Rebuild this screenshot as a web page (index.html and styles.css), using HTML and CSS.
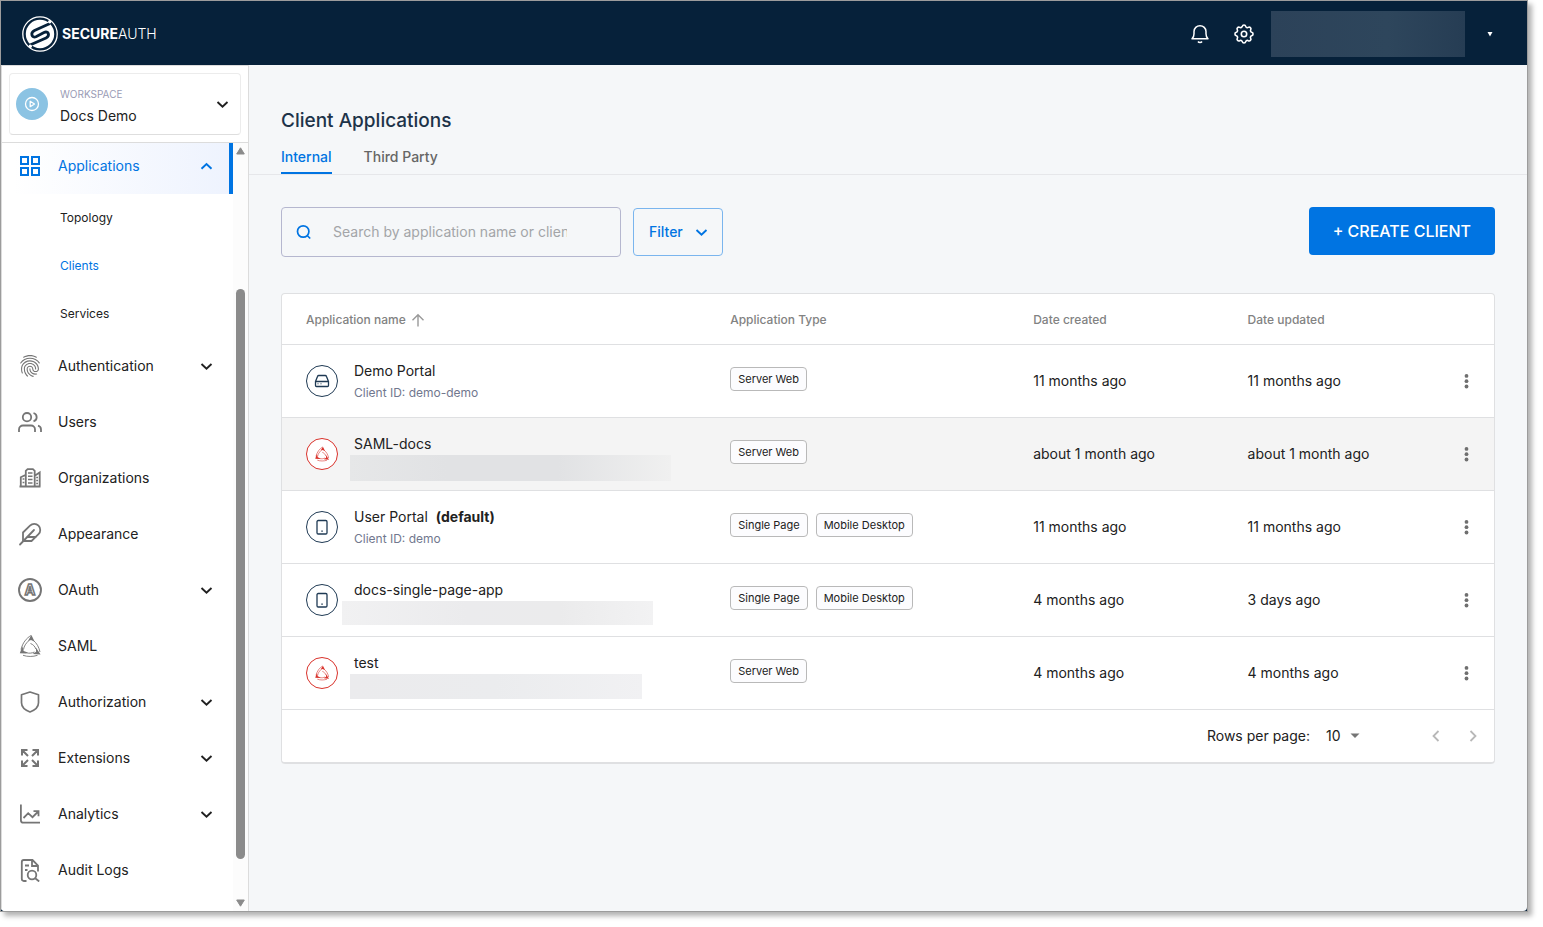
FILE: index.html
```html
<!DOCTYPE html>
<html lang="en">
<head>
  <meta charset="UTF-8">
  <meta name="viewport" content="width=device-width, initial-scale=1">
  <title>Client Applications</title>
  <link rel="stylesheet" href="styles.css">
</head>
<body>
  <!-- Icons -->
  <svg class="sprite" aria-hidden="true">
    <symbol id="chevron-down" viewBox="0 0 24 24"><path d="M7.500 10l5 4.800 5-4.800" fill="none" stroke="currentColor" stroke-width="1.900"/></symbol>
    <symbol id="chevron-up" viewBox="0 0 24 24"><path d="M7.500 14.800l5-4.800 5 4.800" fill="none" stroke="currentColor" stroke-width="1.900"/></symbol>
    <symbol id="more" viewBox="0 0 24 24"><g fill="currentColor"><circle cx="12.500" cy="6.900" r="1.900"/><circle cx="12.500" cy="12.200" r="1.900"/><circle cx="12.500" cy="17.500" r="1.900"/></g></symbol>
    <symbol id="saml" viewBox="0 0 24 24">
      <path d="M13.400 1l3.300 6.800-3.700-1.900-3.200 1.400zM1.800 19.300l2.500-7 1.400 4.600 4 1.700-1.500 1zM22.600 20.500l-8-.5 3.500-2.200-.2-4.200z" fill="currentColor"/>
      <g fill="none" stroke="currentColor" stroke-width=".9">
        <path d="M13 1.500C8.500 4 4.500 9 3 15.500M10.500 7c-2.500 2.300-4.500 5-5 8.500M15.500 6.500c3 2.500 5.500 6.500 6.500 11.500M12.500 9.500c2.500 1 4.500 2.800 5.300 5.500"/>
        <path d="M5 21.300c4.500 1.600 10 1.500 14.500 0M8.500 18.800c3 .8 5.500.3 8-.8"/>
      </g>
    </symbol>
    <symbol id="server" viewBox="0 0 16 16">
      <path d="M1.500 8.300v4.200c0 .6.400 1 1 1h11c.6 0 1-.4 1-1V8.300M1.500 8.500l2-5c.2-.6.600-1 1.300-1h6.400c.7 0 1.100.4 1.300 1l2 5M1.500 8.500h13" fill="none" stroke="currentColor" stroke-width="1.300"/>
      <path d="M3.500 10.800h1M6.500 10.800h1" stroke="currentColor"/>
    </symbol>
    <symbol id="mobile" viewBox="0 0 16 16">
      <rect x="3" y="1.500" width="10" height="13.500" rx="1.200" fill="none" stroke="currentColor" stroke-width="1.300"/>
      <path d="M7.300 12.200h1.500" stroke="currentColor" stroke-width="1.200"/>
    </symbol>
  </svg>

  <div class="window">
    <header class="topbar">
      <a class="logo" href="#">
        <svg width="36" height="36" viewBox="0 0 36 36" aria-hidden="true">
          <circle cx="18" cy="18" r="17.200" fill="none" stroke="#fff" stroke-width="1.300"/>
          <circle cx="18" cy="18" r="14.200" fill="#fff"/>
          <path d="M28 7.500L12.500 14.500C8 16.800 9.700 22.300 14 20.800L22 16.500C26.500 14.300 28.300 19.700 24 22L8 29" fill="none" stroke="#06213a" stroke-width="2.800"/>
          <circle cx="27.700" cy="5.800" r="1.700" fill="#fff"/>
          <circle cx="8.300" cy="30.200" r="1.700" fill="#fff"/>
        </svg>
        <span class="logo-text"><b>SECURE</b>AUTH</span>
      </a>
      <div class="topbar-actions">
        <button class="icon-btn" aria-label="Notifications">
          <svg width="24" height="24" viewBox="0 0 24 24" fill="none" stroke="currentColor" stroke-width="1.500" aria-hidden="true">
            <path d="M4 16.800h16c-1.500-1.200-2-3-2-5V9.500a6 5.800 0 0 0-12 0v2.300c0 2-.5 3.800-2 5z" stroke-linejoin="round"/>
            <path d="M10 19.500c.8 1.300 3.200 1.300 4 0"/>
          </svg>
        </button>
        <button class="icon-btn" aria-label="Settings">
          <svg width="24" height="24" viewBox="0 0 24 24" fill="none" stroke="currentColor" stroke-width="1.600" stroke-linejoin="round" aria-hidden="true">
            <path d="M10.300 4.300c.4-1.800 3-1.800 3.400 0a1.700 1.700 0 0 0 2.600 1.100c1.500-1 3.300.8 2.400 2.400a1.700 1.700 0 0 0 1 2.500c1.800.4 1.800 3 0 3.400a1.700 1.700 0 0 0-1 2.600c.9 1.500-.9 3.300-2.400 2.400a1.700 1.700 0 0 0-2.600 1c-.4 1.800-3 1.800-3.400 0a1.700 1.700 0 0 0-2.600-1c-1.500.9-3.300-.9-2.400-2.400a1.700 1.700 0 0 0-1-2.600c-1.800-.4-1.800-3 0-3.400a1.700 1.700 0 0 0 1-2.500c-.9-1.600.9-3.400 2.400-2.400 1 .6 2.300 0 2.600-1.100z"/>
            <circle cx="12" cy="12" r="2.700"/>
          </svg>
        </button>
        <div class="account"></div>
        <button class="icon-btn" aria-label="Account menu">
          <svg width="24" height="24" viewBox="0 0 24 24" aria-hidden="true"><path d="M9.500 10h5L12 14.500z" fill="currentColor"/></svg>
        </button>
      </div>
    </header>

    <div class="layout">
      <aside class="sidebar">
        <div class="workspace-wrap">
          <button class="workspace">
            <svg width="32" height="32" viewBox="0 0 32 32" aria-hidden="true">
              <circle cx="16" cy="16" r="16" fill="#8bc3e3"/>
              <circle cx="16" cy="16" r="6.500" fill="none" stroke="#fff" stroke-width="1.300"/>
              <path d="M14.200 13.300v5.400l4.300-2.700z" fill="none" stroke="#fff" stroke-width="1.300" stroke-linejoin="round"/>
            </svg>
            <span class="workspace-text">
              <span class="workspace-label">WORKSPACE</span>
              <span class="workspace-name">Docs Demo</span>
            </span>
            <svg class="chevron" aria-hidden="true"><use href="#chevron-down"/></svg>
          </button>
        </div>

        <div class="nav-scroll">
          <nav class="nav">
            <a class="nav-item active" href="#">
              <svg class="nav-icon" viewBox="0 0 24 24" fill="none" stroke="currentColor" stroke-width="2" aria-hidden="true"><path d="M3 3h7v7H3zM14 3h7v7h-7zM3 14h7v7H3zM14 14h7v7h-7z"/></svg>
              <span>Applications</span>
              <svg class="chevron" aria-hidden="true"><use href="#chevron-up"/></svg>
            </a>
            <a class="sub-item" href="#">Topology</a>
            <a class="sub-item current" href="#">Clients</a>
            <a class="sub-item" href="#">Services</a>
            <a class="nav-item" href="#">
              <svg class="nav-icon" viewBox="1 1 22 22" fill="currentColor" aria-hidden="true"><path d="M17.810 4.470c-.08 0-.16-.02-.23-.06C15.660 3.420 14 3 12.010 3c-1.980 0-3.860.47-5.570 1.410-.24.13-.54.04-.68-.2-.13-.24-.04-.55.2-.68C7.820 2.520 9.860 2 12.010 2c2.130 0 3.990.47 6.030 1.520.25.13.34.43.21.67-.09.18-.26.28-.44.28zM3.500 9.720c-.1 0-.2-.03-.29-.09-.23-.16-.28-.47-.12-.7.99-1.400 2.250-2.500 3.750-3.270C9.980 4.040 14 4.030 17.150 5.650c1.500.77 2.760 1.860 3.750 3.250.16.22.11.54-.12.7-.23.16-.54.11-.7-.12-.9-1.260-2.040-2.250-3.390-2.940-2.870-1.470-6.540-1.470-9.400.01-1.360.7-2.500 1.700-3.400 2.960-.08.14-.23.21-.39.21zm6.250 12.070c-.13 0-.26-.05-.35-.15-.87-.87-1.340-1.430-2.010-2.640-.69-1.230-1.050-2.730-1.050-4.340 0-2.970 2.540-5.390 5.660-5.390s5.660 2.420 5.660 5.390c0 .28-.22.5-.5.5s-.5-.22-.5-.5c0-2.420-2.090-4.390-4.660-4.390-2.570 0-4.660 1.970-4.660 4.390 0 1.440.32 2.770.93 3.850.64 1.150 1.080 1.640 1.850 2.420.19.2.19.51 0 .71-.11.1-.24.15-.37.15zm7.170-1.850c-1.190 0-2.240-.3-3.100-.89-1.490-1.010-2.380-2.650-2.380-4.390 0-.28.22-.5.5-.5s.5.22.5.5c0 1.410.72 2.740 1.940 3.560.71.48 1.540.71 2.540.71.24 0 .64-.03 1.040-.1.27-.05.53.13.58.41.05.27-.13.53-.41.58-.57.11-1.070.12-1.210.12zM14.910 22c-.04 0-.09-.01-.13-.02-1.590-.44-2.630-1.030-3.720-2.100-1.400-1.390-2.170-3.240-2.170-5.220 0-1.620 1.380-2.940 3.080-2.940 1.700 0 3.080 1.320 3.080 2.940 0 1.070.93 1.940 2.080 1.940s2.080-.87 2.080-1.940c0-3.770-3.250-6.830-7.250-6.830-2.840 0-5.440 1.580-6.610 4.030-.39.81-.59 1.760-.59 2.800 0 .78.07 2.010.67 3.610.1.26-.03.55-.29.64-.26.1-.55-.04-.64-.29-.49-1.310-.73-2.610-.73-3.960 0-1.200.23-2.290.68-3.240 1.330-2.790 4.280-4.600 7.510-4.600 4.550 0 8.250 3.510 8.250 7.830 0 1.620-1.380 2.940-3.080 2.940s-3.080-1.320-3.080-2.940c0-1.070-.93-1.940-2.080-1.940s-2.080.87-2.080 1.940c0 1.710.66 3.310 1.870 4.510.95.94 1.860 1.460 3.270 1.850.27.07.42.35.35.61-.05.23-.26.38-.47.38z"/></svg>
              <span>Authentication</span>
              <svg class="chevron" aria-hidden="true"><use href="#chevron-down"/></svg>
            </a>
            <a class="nav-item" href="#">
              <svg class="nav-icon" viewBox="0 0 24 24" fill="none" stroke="currentColor" stroke-width="1.800" aria-hidden="true"><path d="M17 22v-2.500a4 4 0 0 0-4-4H5a4 4 0 0 0-4 4V22"/><circle cx="9" cy="7.200" r="4.200"/><path d="M23 22v-2.500a4 4 0 0 0-3-3.900M15.500 3a4.300 4.300 0 0 1 0 8.300"/></svg>
              <span>Users</span>
            </a>
            <a class="nav-item" href="#">
              <svg class="nav-icon" viewBox="0 0 24 24" fill="none" stroke="currentColor" stroke-width="1.800" aria-hidden="true"><path d="M1.500 20.500h21M2.800 20.500v-9.300l5-2.400M21.700 20.500V6.500l-5 3.200M7.800 20.500V4.800l1.800-1.600h5.300l1.800 1.600v15.700"/><path d="M10 7h4.500M10 10.300h4.500M10 13.600h4.500M10 17h4.500M4.600 13h1.800M4.600 16.500h1.800M18.200 11.500H20M18.200 14.500H20M18.200 17.500H20" stroke-width="1.500"/></svg>
              <span>Organizations</span>
            </a>
            <a class="nav-item" href="#">
              <svg class="nav-icon" viewBox="0 0 24 24" fill="none" stroke="currentColor" stroke-width="1.800" stroke-linecap="round" stroke-linejoin="round" aria-hidden="true"><path d="M20.500 12.200a6 6 0 0 0-8.500-8.500L5 10.500V19h8.500z"/><path d="M16 8L2 22.500M17.500 15H9"/></svg>
              <span>Appearance</span>
            </a>
            <a class="nav-item" href="#">
              <svg class="nav-icon" viewBox="0 0 24 24" aria-hidden="true">
                <circle cx="12" cy="12" r="11" fill="none" stroke="currentColor" stroke-width="1.900"/>
                <text class="oauth-letter" x="12" y="17" text-anchor="middle">A</text>
              </svg>
              <span>OAuth</span>
              <svg class="chevron" aria-hidden="true"><use href="#chevron-down"/></svg>
            </a>
            <a class="nav-item" href="#">
              <svg class="nav-icon" aria-hidden="true"><use href="#saml"/></svg>
              <span>SAML</span>
            </a>
            <a class="nav-item" href="#">
              <svg class="nav-icon" viewBox="0 0 24 24" fill="none" stroke="currentColor" stroke-width="1.700" stroke-linejoin="round" aria-hidden="true"><path d="M12 2l8.500 2.800v8c0 4-3.200 7.200-8.500 9.200-5.300-2-8.500-5.200-8.500-9.200v-8z"/></svg>
              <span>Authorization</span>
              <svg class="chevron" aria-hidden="true"><use href="#chevron-down"/></svg>
            </a>
            <a class="nav-item" href="#">
              <svg class="nav-icon" viewBox="0 0 24 24" fill="none" stroke="currentColor" stroke-width="2" aria-hidden="true"><path d="M4 9.500V4h5.500M14.500 4H20v5.500M20 14.500V20h-5.500M9.500 20H4v-5.500M4 4l6 6M20 4l-6 6M20 20l-6-6M4 20l6-6"/></svg>
              <span>Extensions</span>
              <svg class="chevron" aria-hidden="true"><use href="#chevron-down"/></svg>
            </a>
            <a class="nav-item" href="#">
              <svg class="nav-icon" viewBox="0 0 24 24" fill="none" stroke="currentColor" stroke-width="1.800" aria-hidden="true"><path d="M2.900 2.500v15.700c0 1.600.9 2.500 2.500 2.500H22"/><path d="M5.500 16l4.700-4.800 4.300 4 5.700-5.700M15.500 9.200h5v5"/></svg>
              <span>Analytics</span>
              <svg class="chevron" aria-hidden="true"><use href="#chevron-down"/></svg>
            </a>
            <a class="nav-item" href="#">
              <svg class="nav-icon" viewBox="0 0 24 24" fill="none" stroke="currentColor" stroke-width="1.800" aria-hidden="true"><path d="M8.500 23H5.800c-1.200 0-2-.8-2-2V4c0-1.200.8-2 2-2h8.700l5.500 5.500v6M14 2v6h6M7 7.500h4M7 12h2.500"/><circle cx="14" cy="17" r="4.300"/><path d="M17.200 20.200l4 3.300"/></svg>
              <span>Audit Logs</span>
            </a>
          </nav>
          <div class="scrollbar" aria-hidden="true">
            <svg width="9" height="8" viewBox="0 0 9 8"><path d="M4.500.8L8.300 7H.7z" fill="#8b8b8b" stroke="#8b8b8b" stroke-linejoin="round"/></svg>
            <div class="scrollbar-thumb"></div>
            <svg width="9" height="8" viewBox="0 0 9 8"><path d="M4.500 7.200L8.300 1H.7z" fill="#8b8b8b" stroke="#8b8b8b" stroke-linejoin="round"/></svg>
          </div>
        </div>
      </aside>

      <main class="content">
        <h1>Client Applications</h1>
        <div class="tabs">
          <a class="tab selected" href="#">Internal</a>
          <a class="tab" href="#">Third Party</a>
        </div>

        <div class="toolbar">
          <div class="search">
            <svg width="16" height="16" viewBox="0 0 16 16" fill="none" stroke="#0074e2" stroke-width="1.700" aria-hidden="true"><circle cx="7.200" cy="7.500" r="5.700"/><path d="M11.200 11.500l3 3"/></svg>
            <input type="text" placeholder="Search by application name or client ID" aria-label="Search clients">
          </div>
          <button class="filter-btn">
            Filter
            <svg class="chevron" aria-hidden="true"><use href="#chevron-down"/></svg>
          </button>
          <button class="create-btn">+ CREATE CLIENT</button>
        </div>

        <section class="card">
          <table class="clients">
            <colgroup>
              <col class="col-name">
              <col class="col-type">
              <col>
              <col>
              <col class="col-menu">
            </colgroup>
            <thead>
              <tr>
                <th>
                  <span class="sort">Application name
                    <svg width="14" height="14" viewBox="0 0 14 14" fill="none" stroke="#999" stroke-width="1.400" aria-hidden="true"><path d="M7 13.500V2M1.500 7.300L7 1.800l5.500 5.500"/></svg>
                  </span>
                </th>
                <th>Application Type</th>
                <th>Date created</th>
                <th>Date updated</th>
                <th></th>
              </tr>
            </thead>
            <tbody>
              <tr>
                <td>
                  <div class="app">
                    <span class="app-icon"><svg aria-hidden="true"><use href="#server"/></svg></span>
                    <div>
                      <div class="app-name">Demo Portal</div>
                      <div class="app-id">Client ID: demo-demo</div>
                    </div>
                  </div>
                </td>
                <td><span class="chip">Server Web</span></td>
                <td>11 months ago</td>
                <td>11 months ago</td>
                <td><button class="menu-btn" aria-label="More"><svg aria-hidden="true"><use href="#more"/></svg></button></td>
              </tr>
              <tr class="hovered">
                <td>
                  <div class="app">
                    <span class="app-icon red"><svg aria-hidden="true"><use href="#saml"/></svg></span>
                    <div>
                      <div class="app-name">SAML-docs</div>
                      <div class="masked masked-long"></div>
                    </div>
                  </div>
                </td>
                <td><span class="chip">Server Web</span></td>
                <td>about 1 month ago</td>
                <td>about 1 month ago</td>
                <td><button class="menu-btn" aria-label="More"><svg aria-hidden="true"><use href="#more"/></svg></button></td>
              </tr>
              <tr>
                <td>
                  <div class="app">
                    <span class="app-icon"><svg aria-hidden="true"><use href="#mobile"/></svg></span>
                    <div>
                      <div class="app-name">User Portal <b>(default)</b></div>
                      <div class="app-id">Client ID: demo</div>
                    </div>
                  </div>
                </td>
                <td><span class="chip">Single Page</span><span class="chip">Mobile Desktop</span></td>
                <td>11 months ago</td>
                <td>11 months ago</td>
                <td><button class="menu-btn" aria-label="More"><svg aria-hidden="true"><use href="#more"/></svg></button></td>
              </tr>
              <tr>
                <td>
                  <div class="app">
                    <span class="app-icon"><svg aria-hidden="true"><use href="#mobile"/></svg></span>
                    <div>
                      <div class="app-name">docs-single-page-app</div>
                      <div class="masked masked-wide"></div>
                    </div>
                  </div>
                </td>
                <td><span class="chip">Single Page</span><span class="chip">Mobile Desktop</span></td>
                <td>4 months ago</td>
                <td>3 days ago</td>
                <td><button class="menu-btn" aria-label="More"><svg aria-hidden="true"><use href="#more"/></svg></button></td>
              </tr>
              <tr>
                <td>
                  <div class="app">
                    <span class="app-icon red"><svg aria-hidden="true"><use href="#saml"/></svg></span>
                    <div>
                      <div class="app-name">test</div>
                      <div class="masked"></div>
                    </div>
                  </div>
                </td>
                <td><span class="chip">Server Web</span></td>
                <td>4 months ago</td>
                <td>4 months ago</td>
                <td><button class="menu-btn" aria-label="More"><svg aria-hidden="true"><use href="#more"/></svg></button></td>
              </tr>
            </tbody>
          </table>

          <div class="pager">
            <label for="rows">Rows per page:</label>
            <div class="rows-select">
              <select id="rows">
                <option>10</option>
                <option>25</option>
                <option>50</option>
              </select>
              <svg width="10" height="6" viewBox="0 0 10 6" aria-hidden="true"><path d="M.5.500h9L5 5z" fill="#757575"/></svg>
            </div>
            <button class="page-btn" aria-label="Previous page"><svg width="24" height="24" viewBox="0 0 24 24" aria-hidden="true"><path d="M14.500 7l-5 5 5 5" fill="none" stroke="currentColor" stroke-width="1.800"/></svg></button>
            <button class="page-btn" aria-label="Next page"><svg width="24" height="24" viewBox="0 0 24 24" aria-hidden="true"><path d="M9.500 7l5 5-5 5" fill="none" stroke="currentColor" stroke-width="1.800"/></svg></button>
          </div>
        </section>
      </main>
    </div>
  </div>
</body>
</html>
```

FILE: styles.css
```css
:root {
  --navy: #06213a;
  --blue: #0074e2;
  --text: #212121;
  --muted: #71778e;
  --line: #dfe0e2;
  --bg: #f5f7f9;
}

* {
  box-sizing: border-box;
}

body {
  margin: 0;
  padding: 0 15px 15px 0;
  height: 100vh;
  background: #fff;
  color: var(--text);
  font-family: Inter, "Liberation Sans", sans-serif;
  font-size: 14px;
  line-height: 20px;
}

a {
  color: inherit;
  text-decoration: none;
}

button {
  font: inherit;
  color: inherit;
  background: none;
  border: none;
  padding: 0;
  cursor: pointer;
}

svg {
  display: block;
  flex-shrink: 0;
}

.sprite {
  display: none;
}

.window {
  height: 100%;
  display: flex;
  flex-direction: column;
  border: 1px solid #9c9c9c;
  background: var(--navy);
  box-shadow: 4px 4px 5px rgba(0, 0, 0, 0.3);
}

/* Top bar */
.topbar {
  height: 64px;
  flex-shrink: 0;
  padding: 2px 25px 0 21px;
  display: flex;
  align-items: center;
  justify-content: space-between;
  background: var(--navy);
  color: #fff;
}

.logo {
  display: flex;
  align-items: center;
  gap: 4px;
}

.logo-text {
  font-size: 14px;
  font-weight: 300;
}

.logo-text b {
  font-weight: 700;
}

.topbar-actions {
  display: flex;
  align-items: center;
}

.icon-btn + .icon-btn {
  margin-left: 20px;
}

.account {
  width: 194px;
  height: 46px;
  margin: 0 13px 0 15px;
  background: linear-gradient(90deg, #2c4259, #2e465c 60%, #263d54);
}

.layout {
  flex: 1;
  min-height: 0;
  display: flex;
  border-radius: 0 0 4px 4px;
  overflow: hidden;
  background: var(--bg);
}

/* Sidebar */
.sidebar {
  width: 248px;
  flex-shrink: 0;
  display: flex;
  flex-direction: column;
  border: 1px solid #dcdcdc;
  border-bottom: none;
  background: #fff;
}

.workspace-wrap {
  padding: 7px;
  border-bottom: 1px solid #dcdcdc;
}

.workspace {
  width: 100%;
  height: 62px;
  padding: 0 6px;
  display: flex;
  align-items: center;
  border: 1px solid #ececec;
  border-bottom-color: #dedede;
  border-radius: 4px;
  text-align: left;
}

.workspace-text {
  flex: 1;
  margin-left: 12px;
  padding-top: 3px;
  display: flex;
  flex-direction: column;
}

.workspace-label {
  font-size: 10px;
  color: #9a9cb5;
}

.workspace-name {
  line-height: 24px;
}

.chevron {
  width: 24px;
  height: 24px;
}

.nav-scroll {
  flex: 1;
  min-height: 0;
  display: flex;
  overflow: hidden;
}

/* the list is scrolled a few pixels past its top */
.nav {
  flex: 1;
  margin-top: -5px;
}

.nav-item {
  height: 56px;
  padding: 0 11px 0 16px;
  display: flex;
  align-items: center;
  gap: 16px;
  border-right: 4px solid transparent;
}

.nav-item span {
  flex: 1;
}

.nav-icon {
  width: 24px;
  height: 24px;
  color: #757575;
}

.nav-item.active {
  color: var(--blue);
  border-right-color: var(--blue);
  background: linear-gradient(90deg, #fff 5%, #eef3fe);
}

.nav-item.active .nav-icon {
  color: var(--blue);
}

.oauth-letter {
  font-size: 14px;
  font-weight: 700;
  fill: #fff;
  stroke: currentColor;
  stroke-width: 1.5px;
}

.sub-item {
  display: flex;
  align-items: center;
  height: 48px;
  padding-left: 58px;
  font-size: 12px;
}

.sub-item.current {
  color: var(--blue);
}

.scrollbar {
  width: 15px;
  padding: 4px 0;
  display: flex;
  flex-direction: column;
  align-items: center;
  background: #fcfcfc;
}

.scrollbar-thumb {
  width: 9px;
  flex: 0 0 75%;
  margin: auto 0 40px;
  border-radius: 5px;
  background: #8b8b8b;
}

/* Content */
.content {
  flex: 1;
  min-width: 0;
  padding: 44px 32px 0;
}

h1 {
  margin: 0;
  font-size: 19px;
  line-height: 24px;
  font-weight: 500;
  color: #1d3349;
}

.tabs {
  display: flex;
  gap: 32px;
  margin: 10px -32px 0;
  padding: 0 32px;
  border-bottom: 1px solid #e6e7ea;
}

.tab {
  height: 31px;
  padding-top: 4px;
  font-weight: 500;
  color: #666;
}

.tab.selected {
  color: var(--blue);
  border-bottom: 2px solid var(--blue);
}

.toolbar {
  display: flex;
  align-items: center;
  gap: 12px;
  margin: 32px 0 36px;
}

.search {
  width: 340px;
  height: 50px;
  padding: 0 53px 0 14px;
  display: flex;
  align-items: center;
  gap: 21px;
  border: 1px solid #b5b7cf;
  border-radius: 4px;
}

.search input {
  flex: 1;
  min-width: 0;
  padding: 0;
  border: none;
  outline: none;
  background: none;
  font: inherit;
}

.search input::placeholder {
  color: #a3a5a8;
}

.filter-btn {
  height: 48px;
  padding: 0 9px 0 15px;
  display: flex;
  align-items: center;
  gap: 6px;
  border: 1px solid #7ab5ee;
  border-radius: 4px;
  color: var(--blue);
  font-weight: 500;
}

.create-btn {
  height: 48px;
  align-self: flex-start;
  margin-left: auto;
  padding: 0 24px;
  border-radius: 4px;
  background: var(--blue);
  color: #fff;
  font-size: 16px;
  font-weight: 500;
}

.card {
  border: 1px solid var(--line);
  border-bottom-width: 2px;
  border-radius: 4px;
  background: #fff;
}

.clients {
  width: 100%;
  table-layout: fixed;
  border-collapse: collapse;
}

.col-name {
  width: 35%;
}

.col-type {
  width: 25%;
}

.col-menu {
  width: 56px;
}

.clients th {
  height: 50px;
  padding: 2px 0 0 24px;
  border-bottom: 1px solid var(--line);
  text-align: left;
  font-size: 12px;
  font-weight: 500;
  color: #828282;
}

.sort {
  display: flex;
  align-items: center;
  gap: 5px;
}

.clients td {
  height: 73px;
  padding: 0 0 0 24px;
  border-bottom: 1px solid var(--line);
}

.clients td:first-child {
  padding-top: 15px;
  vertical-align: top;
}

.clients td:last-child {
  padding-left: 16px;
}

.hovered {
  background: #f4f4f4;
}

.app {
  height: 44px;
  display: flex;
  gap: 16px;
}

.app-icon {
  width: 32px;
  height: 32px;
  margin-top: 5px;
  display: flex;
  align-items: center;
  justify-content: center;
  border: 1px solid #1f3a54;
  border-radius: 50%;
  background: #fff;
  color: #1f3a54;
}

.app-icon.red {
  border-color: #d9322b;
  color: #d9322b;
}

.app-icon svg {
  width: 16px;
  height: 16px;
}

.app-name,
.app-id {
  line-height: 22px;
}

.app-name b {
  margin-left: 4px;
  font-weight: 700;
}

.app-id {
  font-size: 12px;
  color: var(--muted);
}

.masked {
  width: 292px;
  height: 25px;
  margin-left: -4px;
  background: linear-gradient(90deg, #ebebed, #ebecee 50%, #f1f1f3);
}

.masked-long {
  width: 321px;
  height: 26px;
  background: linear-gradient(90deg, #e6e7e8, #e1e2e4 30%, #e1e2e4 65%, #f0f0f0);
}

.masked-wide {
  width: 311px;
  height: 24px;
  margin-left: -12px;
  background: linear-gradient(90deg, #f1f1f2, #ebebed 40%, #ebebec 70%, #f2f2f3);
}

.chip {
  display: inline-block;
  height: 24px;
  margin: 0 8px 4px 0;
  padding: 0 7px;
  border: 1px solid #b9b9b9;
  border-radius: 4px;
  background: #fcfcfe;
  font-size: 11px;
  line-height: 22px;
}

.menu-btn {
  display: block;
  color: #6f6f6f;
}

.menu-btn svg {
  width: 24px;
  height: 24px;
}

.pager {
  height: 52px;
  padding-right: 9px;
  display: flex;
  align-items: center;
  justify-content: flex-end;
}

.rows-select {
  display: flex;
  align-items: center;
  margin: 0 64px 0 16px;
}

.rows-select select {
  width: 34px;
  margin-right: -10px;
  padding: 0;
  border: none;
  outline: none;
  appearance: none;
  background: none;
  color: inherit;
  font: inherit;
}

.rows-select svg {
  pointer-events: none;
}

.page-btn {
  color: #b8b8b8;
}

.page-btn + .page-btn {
  margin-left: 13px;
}
```
